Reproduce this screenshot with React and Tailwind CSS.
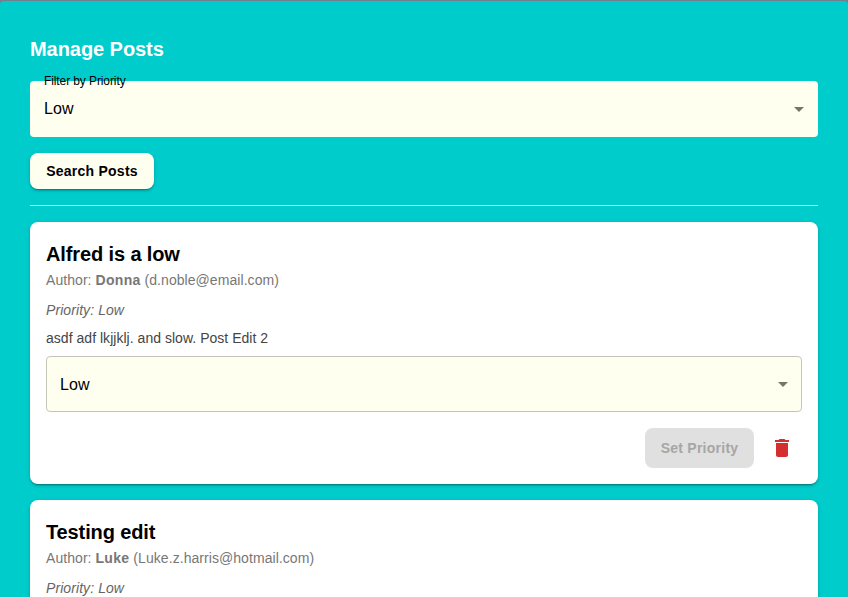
function Caret() {
  return (
    <svg viewBox="0 0 24 24" className="size-6 shrink-0 fill-black/54">
      <path d="M7 10l5 5 5-5z" />
    </svg>
  );
}

function PostControls({ priority }) {
  return (
    <>
      <div className="mt-2 flex h-14 items-center justify-between rounded border border-[#c4c4b7] bg-[#fffff0] pr-1.5 pl-[13px] text-base tracking-[0.15px]">
        <span className="pt-0.5">{priority}</span>
        <Caret />
      </div>
      <div className="mt-4 flex justify-end gap-2">
        <button className="h-10 w-[109px] rounded-lg bg-[#e0e0e0] text-sm font-bold tracking-[0.25px] whitespace-nowrap text-[#a6a6a6]">
          Set Priority
        </button>
        <button className="flex size-10 items-center justify-center" aria-label="Delete post">
          <svg viewBox="0 0 24 24" className="size-6 fill-[#d32f2f]">
            <path d="M6 19c0 1.1.9 2 2 2h8c1.1 0 2-.9 2-2V7H6zM19 4h-3.5l-1-1h-5l-1 1H5v2h14z" />
          </svg>
        </button>
      </div>
    </>
  );
}

function Post({ title, author, email, priority, body }) {
  return (
    <article className="h-[262px] shrink-0 rounded-lg bg-white p-4 shadow-[0_3px_1px_-2px_rgba(0,0,0,0.2),0_2px_2px_0_rgba(0,0,0,0.14),0_1px_5px_0_rgba(0,0,0,0.12)]">
      <h2 className="text-xl leading-8 font-bold tracking-[-0.12px] text-black">{title}</h2>
      <p className="text-sm leading-5 tracking-[0.06px] text-[#777]">
        Author: <strong className="tracking-[0.3px]">{author}</strong> ({email})
      </p>
      <p className="mt-2.5 text-sm leading-5 tracking-[0.08px] text-[#666] italic">Priority: {priority}</p>
      {body && (
        <>
          <p className="mt-2 text-sm leading-5 tracking-[0.03px] text-[#444]">{body}</p>
          <PostControls priority={priority} />
        </>
      )}
    </article>
  );
}

export default function App() {
  return (
    <div className="h-[597px] overflow-hidden bg-[#708090] pt-px font-['Liberation_Sans',Arial,sans-serif] text-black">
      <main className="flex h-[596px] flex-col overflow-hidden rounded-t bg-[#00cccc] px-[30px] pt-8">
        <h1 className="text-xl leading-8 font-bold tracking-[-0.06px] text-white">Manage Posts</h1>
        <div className="relative mt-4 flex h-14 shrink-0 items-center justify-between rounded bg-[#fffff0] pr-[7px] pl-3.5 text-base tracking-[0.15px]">
          <label className="absolute -top-2 left-3.5 text-xs leading-4 tracking-[-0.1px]">Filter by Priority</label>
          <span>Low</span>
          <Caret />
        </div>
        <button className="mt-4 h-9 w-[124px] shrink-0 rounded-lg bg-[#fffff0] text-sm font-bold tracking-[0.25px] whitespace-nowrap shadow-[0_3px_1px_-2px_rgba(0,0,0,0.2),0_2px_2px_0_rgba(0,0,0,0.14),0_1px_5px_0_rgba(0,0,0,0.12)]">
          Search Posts
        </button>
        <hr className="my-4 shrink-0 border-[#cceee5]" />
        <div className="flex flex-col gap-4">
          <Post title="Alfred is a low" author="Donna" email="d.noble@email.com" priority="Low" body="asdf adf lkjjklj. and slow. Post Edit 2" />
          <Post title="Testing edit" author="Luke" email="Luke.z.harris@hotmail.com" priority="Low" />
        </div>
      </main>
    </div>
  );
}
